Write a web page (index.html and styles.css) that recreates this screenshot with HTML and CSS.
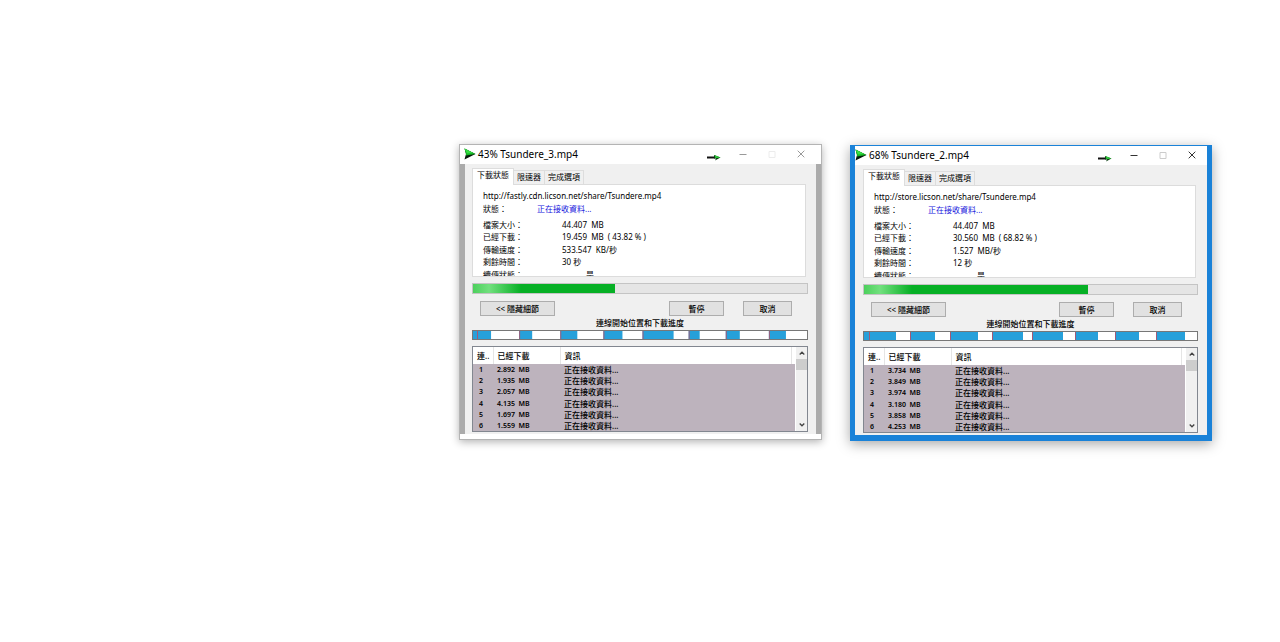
FILE: index.html
```html
<!DOCTYPE html>
<html lang="zh-Hant">
<head>
<meta charset="utf-8">
<title>Tsundere.mp4</title>
<link rel="stylesheet" href="styles.css">
</head>
<body>
<svg class="defs" aria-hidden="true">
  <defs>
    <symbol id="play" viewBox="0 0 12 12"><path d="M0.5 0.5L11.5 6L0.5 11.5L2 6Z" fill="#04180a"/><path d="M0.5 0.5L11.5 6L2 7.5V6Z" fill="#15b524"/><path d="M0.5 0.5L9 5L3 5.5Z" fill="#35df44"/></symbol>
    <symbol id="arrow" viewBox="0 0 14 7"><path d="M0 2.5H8V4.5H0Z" fill="#111"/><path d="M7 1L13.5 3.5L8 6.5L9 4.5H7Z" fill="#0a3d10"/><path d="M7.5 1L13.5 3.5L8.5 4.2Z" fill="#2bc83a"/></symbol>
    <symbol id="min" viewBox="0 0 8 8"><path d="M.5 4.5H7.5" stroke="currentColor"/></symbol>
    <symbol id="max" viewBox="0 0 8 8"><path d="M1 1.5H7V7.5H1Z" fill="none" stroke="currentColor"/></symbol>
    <symbol id="close" viewBox="0 0 8 8"><path d="M.7 .7L7.3 7.3M7.3 .7L.7 7.3" stroke="currentColor"/></symbol>
    <symbol id="up" viewBox="0 0 6 4"><path d="M.7 3.5L3 1.2L5.3 3.5" fill="none" stroke="currentColor" stroke-width="1.3"/></symbol>
    <symbol id="down" viewBox="0 0 6 4"><path d="M.7 .5L3 2.8L5.3 .5" fill="none" stroke="currentColor" stroke-width="1.3"/></symbol>
  </defs>
</svg>

<main class="desktop">
<section class="window window-left">
  <header class="titlebar">
    <svg class="app-icon"><use href="#play"/></svg>
    <h1 class="title">43% Tsundere_3.mp4</h1>
    <svg class="arrow"><use href="#arrow"/></svg>
    <button class="control" aria-label="最小化"><svg><use href="#min"/></svg></button>
    <button class="control maximize" aria-label="最大化" disabled><svg><use href="#max"/></svg></button>
    <button class="control" aria-label="關閉"><svg><use href="#close"/></svg></button>
  </header>
  <div class="body">
    <nav class="tabs" role="tablist">
      <button class="tab active" role="tab" aria-selected="true">下載狀態</button>
      <button class="tab" role="tab">限速器</button>
      <button class="tab" role="tab">完成選項</button>
    </nav>
    <div class="panel">
      <p class="url">http://fastly.cdn.licson.net/share/Tsundere.mp4</p>
      <p class="status"><span>狀態：</span><span class="receiving">正在接收資料...</span></p>
      <dl class="details">
        <dt>檔案大小：</dt><dd>44.407&nbsp; MB</dd>
        <dt>已經下載：</dt><dd>19.459&nbsp; MB&nbsp; ( 43.82 % )</dd>
        <dt>傳輸速度：</dt><dd>533.547&nbsp; KB/秒</dd>
        <dt>剩餘時間：</dt><dd>30 秒</dd>
        <dt>續傳狀態：</dt><dd class="resume">是</dd>
      </dl>
    </div>
    <div class="progress" role="progressbar" aria-valuenow="43"><div class="fill" style="width:42.6%"></div></div>
    <div class="actions">
      <button class="action details-toggle">&lt;&lt; 隱藏細節</button>
      <button class="action pause">暫停</button>
      <button class="action cancel">取消</button>
    </div>
    <p class="caption">連線開始位置和下載進度</p>
    <svg class="segments" viewBox="0 0 333 8" preserveAspectRatio="none">
      <g class="chunk"><rect x="0" width="18" height="8"/><rect x="46" width="13" height="8"/><rect x="87" width="17" height="8"/><rect x="130" width="19" height="8"/><rect x="169" width="31" height="8"/><rect x="215" width="11" height="8"/><rect x="252" width="14" height="8"/><rect x="295" width="17" height="8"/></g>
      <path class="marks" d="M4.5 0V8M46.5 0V8M87.5 0V8M130.5 0V8M169.5 0V8M215.5 0V8M252.5 0V8M295.5 0V8"/>
    </svg>
    <div class="list">
      <table class="connections">
        <thead><tr><th class="number">連..</th><th class="size">已經下載</th><th>資訊</th><th class="spare"></th></tr></thead>
        <tbody>
          <tr><td>1</td><td>2.892&nbsp; MB</td><td colspan="2">正在接收資料...</td></tr>
          <tr><td>2</td><td>1.935&nbsp; MB</td><td colspan="2">正在接收資料...</td></tr>
          <tr><td>3</td><td>2.057&nbsp; MB</td><td colspan="2">正在接收資料...</td></tr>
          <tr><td>4</td><td>4.135&nbsp; MB</td><td colspan="2">正在接收資料...</td></tr>
          <tr><td>5</td><td>1.697&nbsp; MB</td><td colspan="2">正在接收資料...</td></tr>
          <tr><td>6</td><td>1.559&nbsp; MB</td><td colspan="2">正在接收資料...</td></tr>
        </tbody>
      </table>
      <div class="scrollbar">
        <button class="scroll" aria-label="向上"><svg><use href="#up"/></svg></button>
        <div class="thumb"></div>
        <button class="scroll last" aria-label="向下"><svg><use href="#down"/></svg></button>
      </div>
    </div>
  </div>
</section>

<section class="window window-right">
  <header class="titlebar">
    <svg class="app-icon"><use href="#play"/></svg>
    <h1 class="title">68% Tsundere_2.mp4</h1>
    <svg class="arrow"><use href="#arrow"/></svg>
    <button class="control" aria-label="最小化"><svg><use href="#min"/></svg></button>
    <button class="control maximize" aria-label="最大化" disabled><svg><use href="#max"/></svg></button>
    <button class="control" aria-label="關閉"><svg><use href="#close"/></svg></button>
  </header>
  <div class="body">
    <nav class="tabs" role="tablist">
      <button class="tab active" role="tab" aria-selected="true">下載狀態</button>
      <button class="tab" role="tab">限速器</button>
      <button class="tab" role="tab">完成選項</button>
    </nav>
    <div class="panel">
      <p class="url">http://store.licson.net/share/Tsundere.mp4</p>
      <p class="status"><span>狀態：</span><span class="receiving">正在接收資料...</span></p>
      <dl class="details">
        <dt>檔案大小：</dt><dd>44.407&nbsp; MB</dd>
        <dt>已經下載：</dt><dd>30.560&nbsp; MB&nbsp; ( 68.82 % )</dd>
        <dt>傳輸速度：</dt><dd>1.527&nbsp; MB/秒</dd>
        <dt>剩餘時間：</dt><dd>12 秒</dd>
        <dt>續傳狀態：</dt><dd class="resume">是</dd>
      </dl>
    </div>
    <div class="progress" role="progressbar" aria-valuenow="68"><div class="fill" style="width:67.2%"></div></div>
    <div class="actions">
      <button class="action details-toggle">&lt;&lt; 隱藏細節</button>
      <button class="action pause">暫停</button>
      <button class="action cancel">取消</button>
    </div>
    <p class="caption">連線開始位置和下載進度</p>
    <svg class="segments" viewBox="0 0 333 8" preserveAspectRatio="none">
      <g class="chunk"><rect x="0" width="32" height="8"/><rect x="46" width="25" height="8"/><rect x="86" width="28" height="8"/><rect x="128" width="31" height="8"/><rect x="168" width="31" height="8"/><rect x="211" width="23" height="8"/><rect x="251" width="24" height="8"/><rect x="292" width="29" height="8"/></g>
      <path class="marks" d="M5.5 0V8M46.5 0V8M86.5 0V8M128.5 0V8M168.5 0V8M211.5 0V8M251.5 0V8M292.5 0V8"/>
    </svg>
    <div class="list">
      <table class="connections">
        <thead><tr><th class="number">連..</th><th class="size">已經下載</th><th>資訊</th><th class="spare"></th></tr></thead>
        <tbody>
          <tr><td>1</td><td>3.734&nbsp; MB</td><td colspan="2">正在接收資料...</td></tr>
          <tr><td>2</td><td>3.849&nbsp; MB</td><td colspan="2">正在接收資料...</td></tr>
          <tr><td>3</td><td>3.974&nbsp; MB</td><td colspan="2">正在接收資料...</td></tr>
          <tr><td>4</td><td>3.180&nbsp; MB</td><td colspan="2">正在接收資料...</td></tr>
          <tr><td>5</td><td>3.858&nbsp; MB</td><td colspan="2">正在接收資料...</td></tr>
          <tr><td>6</td><td>4.253&nbsp; MB</td><td colspan="2">正在接收資料...</td></tr>
        </tbody>
      </table>
      <div class="scrollbar">
        <button class="scroll" aria-label="向上"><svg><use href="#up"/></svg></button>
        <div class="thumb"></div>
        <button class="scroll last" aria-label="向下"><svg><use href="#down"/></svg></button>
      </div>
    </div>
  </div>
</section>
</main>
</body>
</html>
```
FILE: styles.css
```css
* { box-sizing: border-box; }
body {
  margin: 0;
  background: #fff;
  color: #000;
  font: 8px/12px "Noto Sans", "Noto Sans CJK TC", sans-serif;
}
h1, p, dl, dd { margin: 0; }
button { margin: 0; padding: 0; border: 0; background: none; font: inherit; color: inherit; }
svg { display: block; }
.defs { position: absolute; width: 0; height: 0; }

.desktop { position: relative; min-height: 100vh; }
.window {
  position: absolute;
  width: 363px;
  padding-bottom: 5px;
  border: 1px solid #b4b4b4;
  background: #fff;
  box-shadow: 0 2px 8px rgba(0, 0, 0, .3);
}
.window-left { left: 459px; top: 144px; }
.window-right {
  left: 850px;
  top: 145px;
  width: 362px;
  border-color: #1a82d8;
  background: #1a82d8;
  box-shadow: 0 3px 12px rgba(0, 0, 0, .35);
}

.titlebar { display: flex; align-items: center; height: 19px; padding: 0 12px 2px 4px; background: #fff; }
.window-right .titlebar { margin: 0 4px; padding: 0 7px 2px 0; }
.app-icon { width: 12px; height: 12px; }
.title { flex: 1; margin-left: 2px; font-size: 10px; font-weight: 400; line-height: 16px; white-space: nowrap; }
.arrow { width: 14px; height: 7px; margin: 8px 14px 0 0; }
.control { display: grid; place-items: center; width: 16px; height: 16px; margin-left: 13px; color: #999; }
.arrow + .control { margin-left: 0; }
.control svg { width: 8px; height: 8px; }
.window-right .control { color: #333; }
.control.maximize { color: #ececec; }
.window-right .maximize { color: #ccc; }

.body {
  padding: 4px 8px 2px 7px;
  border: solid #ababab;
  border-width: 0 5px;
  background: #f0f0f0;
}
.window-right .body { padding-left: 8px; padding-right: 9px; border-color: #1a82d8; border-width: 0 4px; }

.tabs { display: flex; align-items: flex-end; height: 16px; }
.tab { height: 14px; padding: 0 3px 1px; border: 1px solid #ddd; border-left: 0; border-bottom: 0; line-height: 12px; }
.tab.active { height: 17px; margin-bottom: -1px; padding: 0 4px 4px; border-left: 1px solid #ddd; background: #fff; z-index: 1; }
.panel {
  height: 93px;
  margin-right: 2px;
  padding: 4px 10px 0;
  border: 1px solid #dcdcdc;
  background: #fff;
  overflow: hidden;
}
.url { line-height: 13px; }
.status { display: flex; line-height: 13px; }
.status span:first-child { width: 54px; }
.receiving { color: #1414dc; }
.details {
  display: grid;
  grid-template-columns: 79px 1fr;
  grid-auto-rows: 1fr;
  height: 62px;
  margin-top: 4px;
}
.resume { padding-left: 24px; }

.progress { height: 11px; margin-top: 6px; border: 1px solid #c4c4c4; background: #e5e5e5; }
.fill { height: 100%; background: linear-gradient(90deg, #4cd05c, #72e07e 16px, #06b025 48px); }
.actions { display: flex; margin: 7px 16px 0 8px; }
.action { height: 15px; border: 1px solid #adadad; background: #e1e1e1; font-weight: 500; line-height: 12px; }
.details-toggle { width: 75px; margin-right: auto; }
.pause { width: 55px; margin-right: 19px; }
.cancel { width: 49px; }
.caption { text-align: center; font-weight: 500; line-height: 14px; }
.segments { width: 100%; height: 10px; border: 1px solid #777; background: #fff; }
.chunk { fill: #26a0da; }
.marks { stroke: #a05a78; stroke-width: 1; }

.list { display: flex; height: 86px; margin-top: 6px; border: 1px solid #828790; background: #fff; }
.connections { flex: 1; height: 84px; border-collapse: collapse; font-weight: 500; line-height: 11px; table-layout: fixed; }
.connections th, .connections td { padding: 0 0 0 4px; text-align: left; font-weight: 500; white-space: nowrap; }
.connections thead { height: 17px; }
.connections th { border-right: 1px solid #e5e5e5; }
.connections th.spare { width: 4px; padding: 0; border-right: 0; }
.connections td { background: #bdb3bd; font-size: 7px; font-weight: 600; }
.connections td:first-child { padding-left: 6px; }
.connections td:last-child { font-size: 8px; font-weight: 500; }
.number { width: 20px; }
.size { width: 67px; }
.scrollbar { display: flex; flex-direction: column; width: 12px; border-left: 1px solid #fff; background: #f0f0f0; }
.scroll { display: grid; place-items: center; height: 12px; color: #444; }
.scroll svg { width: 6px; height: 4px; }
.scroll.last { margin-top: auto; }
.thumb { height: 11px; background: #cdcdcd; }
```
